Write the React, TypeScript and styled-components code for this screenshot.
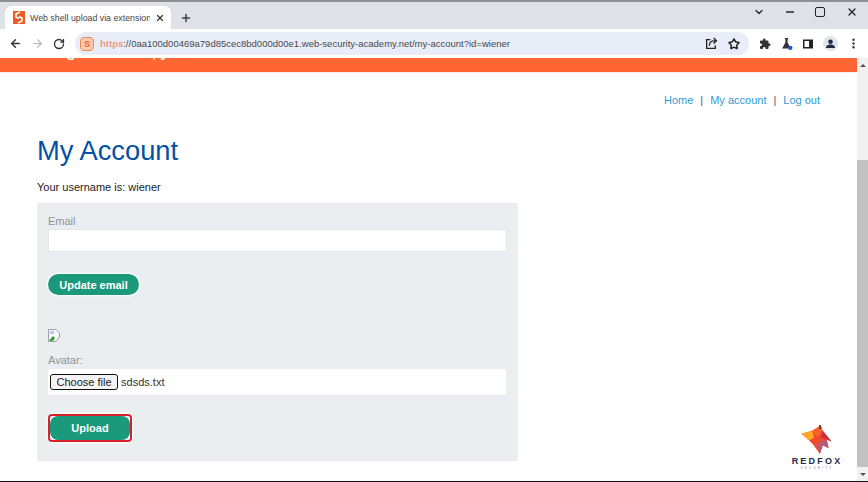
import React from 'react';
import styled, { createGlobalStyle } from 'styled-components';
import {
  ArrowLeft,
  ArrowRight,
  ChevronDown,
  MoreVertical,
  Plus,
  RotateCw,
  Star,
  X,
} from 'lucide-react';

const GlobalStyle = createGlobalStyle`
  html, body {
    margin: 0;
    padding: 0;
    width: 868px;
    height: 482px;
    overflow: hidden;
    background: #fff;
    font-family: "Liberation Sans", Arial, sans-serif;
  }
`;

const Screen = styled.div`
  position: relative;
  width: 868px;
  height: 482px;
  display: flex;
  flex-direction: column;
  overflow: hidden;
  border-top: 2px solid #8d8f92;
  border-bottom: 1px solid #111;
  box-sizing: border-box;
`;

const TabStrip = styled.div`
  height: 27px;
  flex: none;
  background: #dee1e6;
  display: flex;
  align-items: flex-end;
  padding-left: 5px;
`;

const Tab = styled.div`
  width: 166px;
  height: 23px;
  background: #fff;
  border-radius: 7px 7px 0 0;
  display: flex;
  align-items: center;
  padding: 0 6px 0 8px;
  box-sizing: border-box;
  gap: 5px;
`;

const TabTitle = styled.span`
  flex: 1;
  font-size: 8.8px;
  color: #45474a;
  white-space: nowrap;
  overflow: hidden;
`;

const NewTab = styled.div`
  display: flex;
  align-items: center;
  margin: 0 0 5px 9px;
  color: #3c4043;
`;

const WindowControls = styled.div`
  margin-left: auto;
  align-self: flex-start;
  display: flex;
  align-items: center;
  gap: 21px;
  height: 20px;
  padding-right: 10px;
  color: #222;
`;

const MinimizeIcon = styled.span`
  width: 8px;
  height: 2px;
  background: #555;
`;

const MaximizeIcon = styled.span`
  width: 8px;
  height: 8px;
  border: 1.5px solid #222;
  border-radius: 2px;
`;

const Toolbar = styled.div`
  height: 29px;
  flex: none;
  background: #fff;
  display: flex;
  align-items: center;
  padding-left: 9px;
  box-sizing: border-box;
`;

const NavButtons = styled.div`
  display: flex;
  align-items: center;
  gap: 9px;
  color: #333;
  margin-right: 10px;
`;

const AddressBar = styled.div`
  width: 674px;
  height: 23px;
  flex: none;
  background: #e9edf7;
  border-radius: 12px;
  display: flex;
  align-items: center;
  padding: 0 9px 0 5px;
  box-sizing: border-box;
`;

const SiteBadge = styled.span`
  width: 14px;
  height: 14px;
  border-radius: 4px;
  background: #ffc9ae;
  border: 1px solid #f08a5b;
  box-sizing: border-box;
  color: #e8622c;
  font-size: 9px;
  font-weight: 700;
  display: flex;
  align-items: center;
  justify-content: center;
  margin-right: 6px;
`;

const UrlText = styled.span`
  font-size: 9.5px;
  color: #45484f;
  white-space: nowrap;
`;

const UrlScheme = styled.span`
  color: #ec9a85;
  font-weight: 700;
`;

const AddressActions = styled.div`
  margin-left: auto;
  display: flex;
  align-items: center;
  gap: 10px;
  color: #222;
`;

const ToolbarIcons = styled.div`
  display: flex;
  align-items: center;
  gap: 9px;
  margin-left: 10px;
  color: #333;
`;

const Avatar = styled.span`
  width: 15px;
  height: 15px;
  border-radius: 50%;
  background: #dfe3ee;
  display: flex;
  align-items: center;
  justify-content: center;
`;

const Viewport = styled.div`
  flex: 1;
  min-height: 0;
  display: flex;
`;

const Page = styled.main`
  flex: 1;
  min-width: 0;
  background: #fff;
`;

const Banner = styled.div`
  height: 14px;
  background: #ff6633;
  border-bottom: 1px solid #f7f0ec;
  overflow: hidden;
  padding-left: 37px;
  color: #fff;
  font-size: 15px;
  font-weight: 700;
  line-height: 14px;
  white-space: nowrap;
`;

const BannerText = styled.div`
  margin-top: -13px;
`;

const TopNav = styled.nav`
  display: flex;
  justify-content: flex-end;
  align-items: center;
  gap: 7px;
  padding: 19px 37px 0 0;
  height: 15px;
  font-size: 11px;
`;

const NavLink = styled.a`
  color: #2f9bd0;
`;

const NavDivider = styled.span`
  color: #5d5575;
  font-size: 11px;
`;

const Content = styled.section`
  padding: 26px 0 0 37px;
`;

const Title = styled.h1`
  margin: 0;
  color: #0550a5;
  font-size: 27.3px;
  font-weight: 400;
  line-height: 36px;
`;

const Username = styled.p`
  margin: 11px 0 0;
  font-size: 11px;
  line-height: 14px;
  color: #222;
`;

const FormPanel = styled.div`
  width: 481px;
  height: 258px;
  margin-top: 9px;
  padding: 11px 11px 0 11px;
  box-sizing: border-box;
  background: #ebeef1;
`;

const FieldLabel = styled.label`
  display: block;
  font-size: 11px;
  line-height: 14px;
  color: #8f9296;
`;

const TextField = styled.div`
  width: 459px;
  height: 23px;
  margin-top: 1px;
  background: #fff;
  border: 1px solid #e4e7ea;
  box-sizing: border-box;
`;

const PillButton = styled.button`
  display: block;
  height: 21px;
  width: 91px;
  margin-top: 22px;
  padding: 0;
  border: none;
  border-radius: 11px;
  background: #1a9a7b;
  color: #fff;
  font: 700 11px "Liberation Sans", Arial, sans-serif;
  box-shadow: 0 0 0 1.5px #f7fafa;
`;

const UploadButton = styled.button`
  display: block;
  height: 28px;
  width: 84px;
  margin-top: 19px;
  padding: 0;
  border: 2px solid #dc1f2c;
  border-radius: 4px;
  background: #fff;
  box-shadow: 0 0 0 1.5px #f7fafa;
`;

const UploadFace = styled.span`
  display: flex;
  align-items: center;
  justify-content: center;
  height: 100%;
  border-radius: 8px;
  background: #1a9a7b;
  color: #fff;
  font: 700 11px "Liberation Sans", Arial, sans-serif;
`;

const BrokenImage = styled.span`
  display: block;
  width: 12px;
  height: 13px;
  margin-top: 33px;
`;

const AvatarLabel = styled(FieldLabel)`
  margin-top: 12px;
`;

const FileField = styled.div`
  width: 458px;
  height: 26px;
  margin-top: 2px;
  padding-left: 2px;
  background: #fff;
  box-sizing: border-box;
  display: flex;
  align-items: center;
  gap: 3px;
  font-size: 11px;
  color: #333;
`;

const ChooseFile = styled.span`
  height: 14px;
  padding: 0 5.5px;
  border: 1.5px solid #111;
  border-radius: 3px;
  background: #f4f4f4;
  color: #222;
  display: flex;
  align-items: center;
`;

const Scrollbar = styled.div`
  width: 11px;
  flex: none;
  background: #f1f1f1;
  display: flex;
  flex-direction: column;
  align-items: center;
`;

const ScrollArrow = styled.div<{ $down?: boolean }>`
  height: 14px;
  flex: none;
  display: flex;
  align-items: center;
  &::before {
    content: '';
    border-left: 3px solid transparent;
    border-right: 3px solid transparent;
    ${({ $down }) => ($down ? 'border-top' : 'border-bottom')}: 3px solid #555;
  }
`;

const ScrollThumb = styled.div`
  width: 100%;
  height: 307px;
  margin-top: 88px;
  background: #c1c1c1;
`;

const LogoMark = styled.div`
  position: absolute;
  left: 790px;
  bottom: 11px;
  width: 54px;
  display: flex;
  flex-direction: column;
  align-items: center;
`;

const LogoWord = styled.span`
  font-size: 9px;
  font-weight: 700;
  letter-spacing: 2.2px;
  color: #1c2a45;
  line-height: 10px;
  white-space: nowrap;
`;

const LogoSub = styled.span`
  font-size: 3px;
  letter-spacing: 2.2px;
  color: #7a8290;
  line-height: 4px;
`;

const FoxLogo = () => (
  <svg width="38" height="31" viewBox="0 0 36 32">
    <path d="M2 9 L13 6 L21 1 L24 6 L33 17 L28 15 L30 24 L24 21 L21 30 L14 20 L10 16 Z" fill="#f0492d" />
    <path d="M2 9 L13 6 L15 13 L10 16 Z" fill="#ffa726" />
    <path d="M13 6 L21 1 L24 6 L18 12 Z" fill="#f9622c" />
    <path d="M24 6 L33 17 L28 15 L22 13 Z" fill="#c9303f" />
    <path d="M28 15 L30 24 L24 21 L21 30 L18 19 Z" fill="#b55a78" />
    <path d="M20 0 L22 0 L23 4 L20 4 Z" fill="#7a3b2a" />
  </svg>
);

const ExtensionIcon = () => (
  <svg width="12" height="12" viewBox="0 0 24 24" fill="currentColor">
    <path d="M20.5 11H19V7a2 2 0 0 0-2-2h-4V3.5a2.5 2.5 0 0 0-5 0V5H4a2 2 0 0 0-2 2v3.8h1.5a2.7 2.7 0 0 1 0 5.4H2V20a2 2 0 0 0 2 2h3.8v-1.5a2.7 2.7 0 0 1 5.4 0V22H17a2 2 0 0 0 2-2v-4h1.5a2.5 2.5 0 0 0 0-5z" />
  </svg>
);

const ShareIcon = () => (
  <svg width="13" height="13" viewBox="0 0 24 24" fill="none" stroke="currentColor" strokeWidth="2.4">
    <path d="M10 5H3v16h16v-6" />
    <path d="M8 16c0-6 4-9 9-9h4" />
    <path d="M16 2l5 5-5 5" />
  </svg>
);

const FlaskIcon = () => (
  <svg width="13" height="13" viewBox="0 0 24 24">
    <path d="M9 2h6v2h-1v6l6 11H4l6-11V4H9z" fill="#333" />
    <circle cx="19" cy="20" r="4" fill="#1a56d6" />
  </svg>
);

const SidePanelIcon = () => (
  <svg width="12" height="12" viewBox="0 0 24 24">
    <path d="M2 3h20v18H2z M5 6v12h9V6z" fill="#222" fillRule="evenodd" />
  </svg>
);

const PersonIcon = () => (
  <svg width="11" height="11" viewBox="0 0 24 24" fill="#1f2a44">
    <circle cx="12" cy="8" r="5" />
    <path d="M2 22c0-6 5-8 10-8s10 2 10 8z" />
  </svg>
);

const TabFavicon = () => (
  <svg width="12" height="13" viewBox="0 0 12 13">
    <rect width="12" height="13" fill="#ef5a24" />
    <path d="M7 1 L3 3 V6 L6 7.5 M5 12 L9 10 V7 L6 5.5" stroke="#fff" strokeWidth="1.6" fill="none" />
  </svg>
);

const BrokenImageIcon = () => (
  <svg width="12" height="13" viewBox="0 0 12 13">
    <path d="M0.5 0.5 H8 L11.5 4 V8 L8 12.5 H0.5 Z" fill="#f6f8fa" stroke="#9aa0a6" />
    <path d="M1.5 11 L5 7 L7 9 L5 12 H1.5 Z" fill="#3f9b3f" />
    <path d="M2 2 H6 V5 H2 Z" fill="#b7c9ee" />
  </svg>
);

const App: React.FC = (): JSX.Element => {
  return (
    <Screen>
      <GlobalStyle />
      <TabStrip>
        <Tab>
          <TabFavicon />
          <TabTitle>Web shell upload via extension blacklist</TabTitle>
          <X size={10} strokeWidth={3} color="#333" />
        </Tab>
        <NewTab>
          <Plus size={12} strokeWidth={3} />
        </NewTab>
        <WindowControls>
          <ChevronDown size={12} strokeWidth={2.5} />
          <MinimizeIcon />
          <MaximizeIcon />
          <X size={12} strokeWidth={2.5} />
        </WindowControls>
      </TabStrip>
      <Toolbar>
        <NavButtons>
          <ArrowLeft size={13} strokeWidth={2.5} />
          <ArrowRight size={13} strokeWidth={2} color="#b2b4b7" />
          <RotateCw size={12} strokeWidth={2.6} />
        </NavButtons>
        <AddressBar>
          <SiteBadge>S</SiteBadge>
          <UrlText>
            <UrlScheme>https</UrlScheme>
            ://0aa100d00469a79d85cec8bd000d00e1.web-security-academy.net/my-account?id=wiener
          </UrlText>
          <AddressActions>
            <ShareIcon />
            <Star size={12} strokeWidth={3} />
          </AddressActions>
        </AddressBar>
        <ToolbarIcons>
          <ExtensionIcon />
          <FlaskIcon />
          <SidePanelIcon />
          <Avatar>
            <PersonIcon />
          </Avatar>
          <MoreVertical size={13} strokeWidth={2.6} />
        </ToolbarIcons>
      </Toolbar>
      <Viewport>
        <Page>
          <Banner>
            <BannerText>Congratulations, you solved the lab!</BannerText>
          </Banner>
          <TopNav>
            <NavLink>Home</NavLink>
            <NavDivider>|</NavDivider>
            <NavLink>My account</NavLink>
            <NavDivider>|</NavDivider>
            <NavLink>Log out</NavLink>
          </TopNav>
          <Content>
            <Title>My Account</Title>
            <Username>Your username is: wiener</Username>
            <FormPanel>
              <FieldLabel>Email</FieldLabel>
              <TextField />
              <PillButton>Update email</PillButton>
              <BrokenImage>
                <BrokenImageIcon />
              </BrokenImage>
              <AvatarLabel>Avatar:</AvatarLabel>
              <FileField>
                <ChooseFile>Choose file</ChooseFile>
                sdsds.txt
              </FileField>
              <UploadButton>
                <UploadFace>Upload</UploadFace>
              </UploadButton>
            </FormPanel>
          </Content>
        </Page>
        <Scrollbar>
          <ScrollArrow />
          <ScrollThumb />
          <ScrollArrow $down />
        </Scrollbar>
      </Viewport>
      <LogoMark>
        <FoxLogo />
        <LogoWord>REDFOX</LogoWord>
        <LogoSub>SECURITY</LogoSub>
      </LogoMark>
    </Screen>
  );
};

export default App;
